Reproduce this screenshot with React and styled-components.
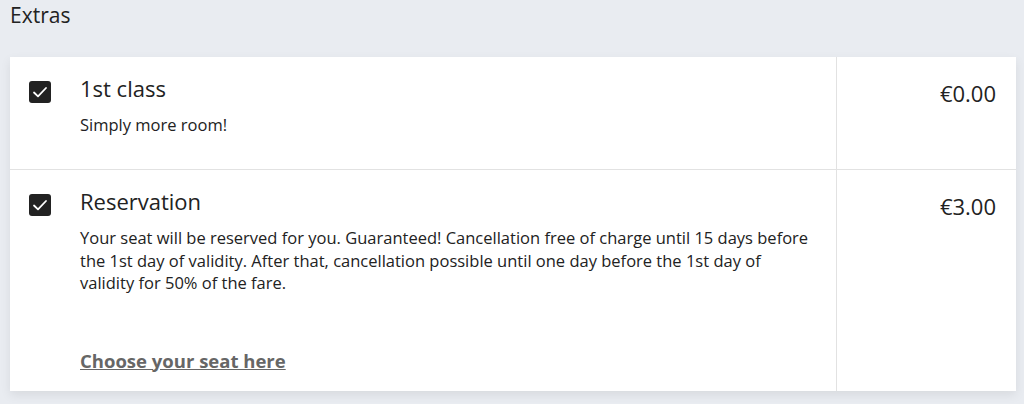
import React from "react";
import styled, { createGlobalStyle } from "styled-components";

const GlobalStyle = createGlobalStyle`
  html, body {
    margin: 0;
    padding: 0;
    background: #e9ecf1;
    font-family: "Open Sans", "Noto Sans", sans-serif;
    color: #222;
  }
`;

const Page = styled.div`
  padding: 0 8px 12px 10px;
`;

const Heading = styled.h2`
  margin: 0;
  height: 57px;
  font-size: 21px;
  font-weight: 400;
  line-height: 30px;
`;

const Card = styled.div`
  background: #fff;
  box-shadow: 0 4px 10px rgba(0, 0, 0, 0.08);
`;

const Row = styled.div`
  display: grid;
  grid-template-columns: 1fr 180px;
  min-height: ${(p) => p.$minHeight}px;
  & + & {
    border-top: 1px solid #e2e2e2;
  }
`;

const Main = styled.div`
  display: flex;
  gap: 29px;
  padding: 16px 18px 18px 19px;
`;

const Box = styled.span`
  flex: none;
  width: 22px;
  height: 22px;
  margin-top: 8px;
  border-radius: 3px;
  background: #222;
  display: flex;
  align-items: center;
  justify-content: center;
`;

const Body = styled.div`
  display: flex;
  flex-direction: column;
  max-width: 740px;
`;

const Title = styled.div`
  font-size: 22px;
  line-height: 30px;
`;

const Text = styled.p`
  margin: 11px 0 0;
  font-size: 16.5px;
  line-height: 22.5px;
`;

const SeatLink = styled.a`
  margin-top: 53px;
  font-size: 18.5px;
  font-weight: 700;
  color: #666;
  text-decoration: underline;
  cursor: pointer;
`;

const Price = styled.div`
  border-left: 1px solid #e2e2e2;
  padding: 21px 20px 0 0;
  text-align: right;
  font-size: 22px;
  line-height: 30px;
`;

const Check = () => (
  <svg width="16" height="16" viewBox="0 0 16 16" fill="none">
    <path d="M2 8.5l4 3.8 8-8.3" stroke="#fff" strokeWidth="1.8" strokeLinecap="round" strokeLinejoin="round" />
  </svg>
);

export default function App() {
  return (
    <Page>
      <GlobalStyle />
      <Heading>Extras</Heading>
      <Card>
        <Row $minHeight={112}>
          <Main>
            <Box><Check /></Box>
            <Body>
              <Title>1st class</Title>
              <Text>Simply more room!</Text>
            </Body>
          </Main>
          <Price>€0.00</Price>
        </Row>
        <Row $minHeight={221}>
          <Main>
            <Box><Check /></Box>
            <Body>
              <Title>Reservation</Title>
              <Text>
                Your seat will be reserved for you. Guaranteed! Cancellation free of charge until 15 days before
                the 1st day of validity. After that, cancellation possible until one day before the 1st day of
                validity for 50% of the fare.
              </Text>
              <SeatLink>Choose your seat here</SeatLink>
            </Body>
          </Main>
          <Price>€3.00</Price>
        </Row>
      </Card>
    </Page>
  );
}
